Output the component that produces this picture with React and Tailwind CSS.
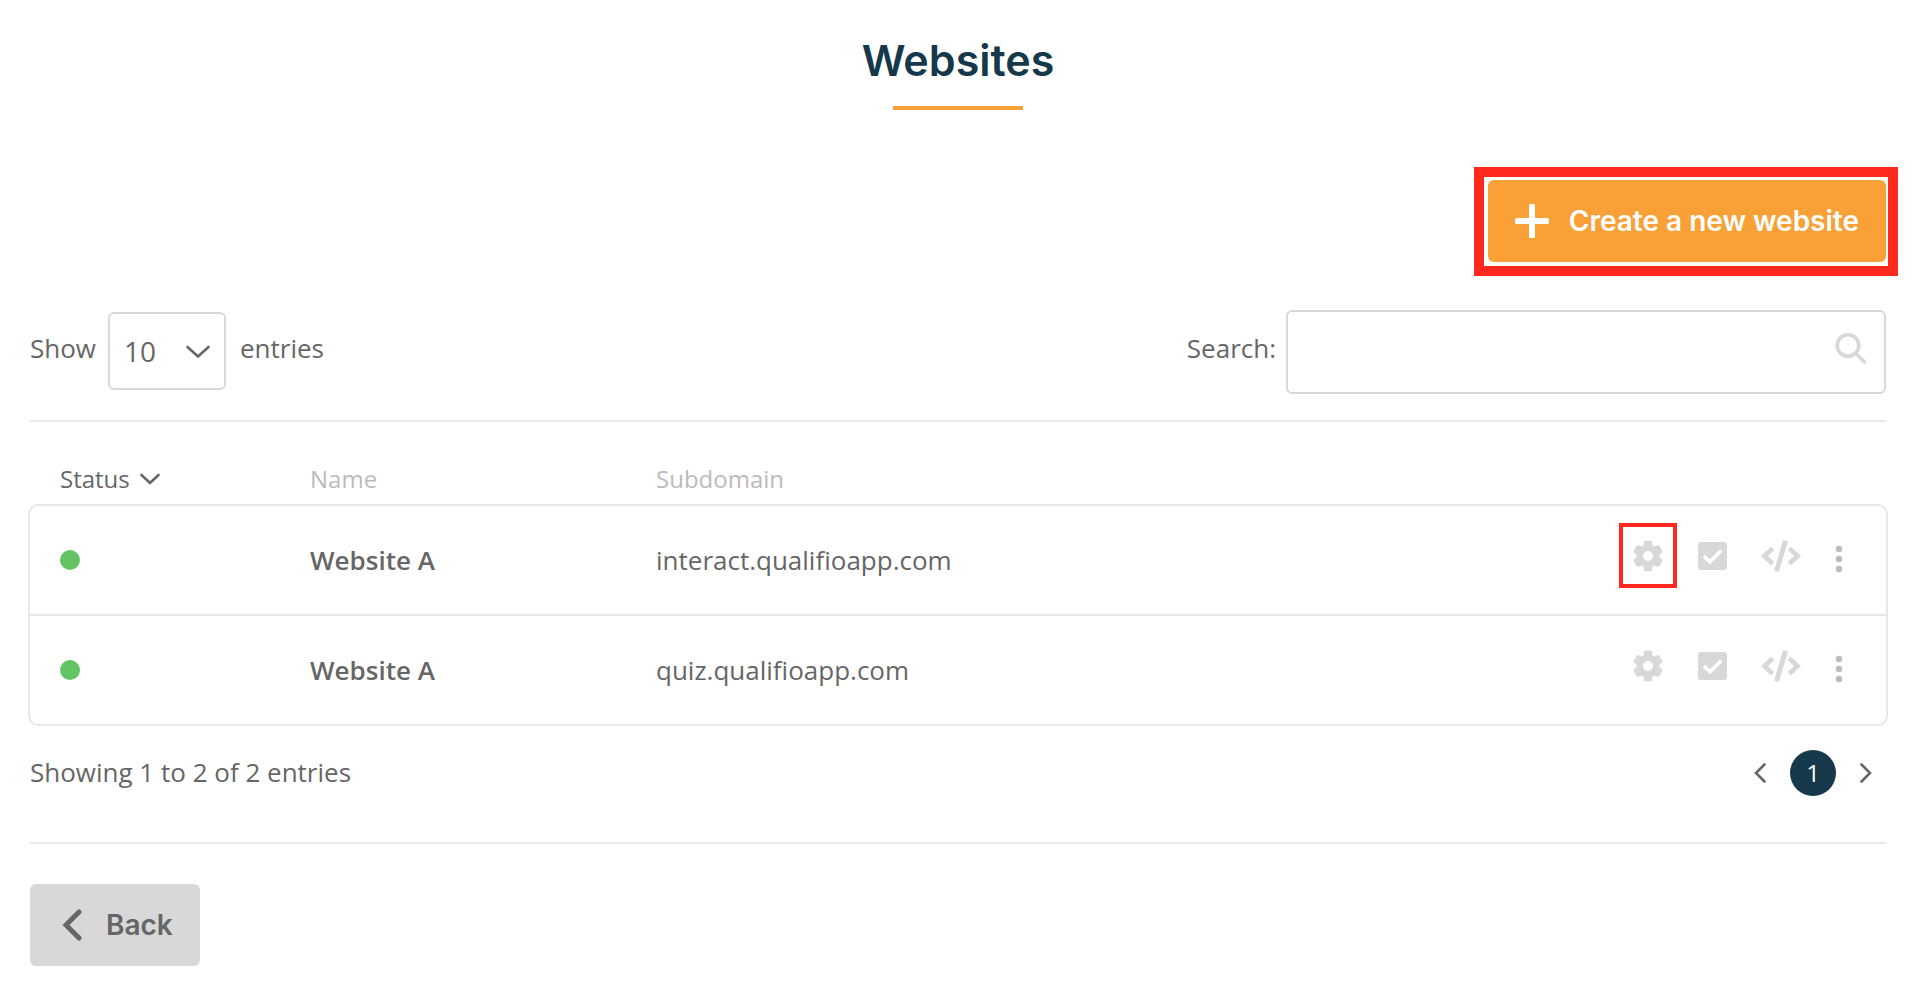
import { useState } from "react";

const websites = [
  { id: 1, name: "Website A", subdomain: "interact.qualifioapp.com", highlighted: true },
  { id: 2, name: "Website A", subdomain: "quiz.qualifioapp.com", highlighted: false },
];

const Chevron = ({ className, points, viewBox, width = 3 }) => (
  <svg
    className={className}
    viewBox={viewBox}
    fill="none"
    stroke="currentColor"
    strokeWidth={width}
    strokeLinecap="round"
    strokeLinejoin="miter"
    aria-hidden="true"
  >
    <polyline points={points} />
  </svg>
);

const GearIcon = () => (
  <svg className="h-8 w-[30px]" viewBox="0 0 30 32" fill="currentColor" aria-hidden="true">
    <path
      fillRule="evenodd"
      d="M11 1.2Q15 0 19 1.2L19.2 5.2L21.6 6.6L25.2 4.8Q28.6 8 29.6 12.2L26.6 14.4V17.6L29.6 19.8Q28.6 24 25.2 27.2L21.6 25.4L19.2 26.8L19 30.8Q15 32 11 30.8L10.8 26.8L8.4 25.4L4.8 27.2Q1.4 24 0.4 19.8L3.4 17.6V14.4L0.4 12.2Q1.4 8 4.8 4.8L8.4 6.6L10.8 5.2ZM15 11a5 5 0 1 0 0 10a5 5 0 1 0 0-10Z"
    />
  </svg>
);

const CheckIcon = () => (
  <svg className="h-7 w-[29px]" viewBox="0 0 29 28" aria-hidden="true">
    <rect width="29" height="28" rx="3" fill="currentColor" />
    <path d="M4.5 15.2L7 12.7L12 17.2L22 7.2L24.5 9.7L12 22.2Z" fill="#fff" />
  </svg>
);

const CodeIcon = () => (
  <svg className="h-8 w-10" viewBox="0 0 40 32" fill="currentColor" aria-hidden="true">
    <path d="M10 6.8L13.4 10L7 16L13.4 22L10 25.4L0 16Z" />
    <path d="M30 6.8L26.6 10L33 16L26.6 22L30 25.4L40 16Z" />
    <path d="M22.2 0L27 1.2L17.8 32L13 30.8Z" />
  </svg>
);

const DotsIcon = () => (
  <svg className="h-[34px] w-2" viewBox="0 0 8 34" fill="currentColor" aria-hidden="true">
    <circle cx="4" cy="10" r="3.2" />
    <circle cx="4" cy="20" r="3.2" />
    <circle cx="4" cy="30" r="3.2" />
  </svg>
);

const RowActions = ({ highlighted }) => (
  <div className="flex items-center justify-end pr-[43px] pb-2 text-[#d8d8d8]">
    <button className="relative mr-[35px]" aria-label="Settings">
      <GearIcon />
      {highlighted && (
        <span className="absolute -inset-x-3.5 -top-[17px] -bottom-4 border-4 border-[#ff2a1d]" />
      )}
    </button>
    <button className="mr-[34px]" aria-label="Activate">
      <CheckIcon />
    </button>
    <button className="mr-[34px]" aria-label="Embed code">
      <CodeIcon />
    </button>
    <button className="text-[#bbb]" aria-label="More actions">
      <DotsIcon />
    </button>
  </div>
);

const App = () => {
  const [pageSize, setPageSize] = useState("10");
  const [query, setQuery] = useState("");

  return (
    <main className="bg-white pt-8 pr-8 pb-[26px] pl-[30px] font-['Open_Sans',sans-serif] text-[26px] leading-9 text-[#666]">
      <header className="flex flex-col items-center">
        <h1 className="font-[Inter,sans-serif] text-[43px] leading-14 font-semibold text-[#15384a]">
          Websites
        </h1>
        <div className="mt-[18px] h-1 w-[130px] bg-[#f9a037]" />
      </header>

      <div className="mt-[70px] flex justify-end">
        <div className="relative">
          <button className="flex h-[82px] items-center gap-5 rounded-md bg-[#f9a037] px-[27px] font-[Inter,sans-serif] text-[28px] font-semibold text-white">
            <svg className="size-[34px]" viewBox="0 0 34 34" fill="currentColor" aria-hidden="true">
              <rect x="14" width="6" height="34" rx="1.5" />
              <rect y="14" width="34" height="6" rx="1.5" />
            </svg>
            Create a new website
          </button>
          <span className="pointer-events-none absolute -top-[13px] -right-3 -bottom-3.5 -left-3.5 border-10 border-[#ff2a1d]" />
        </div>
      </div>

      <div className="mt-12 flex items-center justify-between">
        <div className="flex items-center">
          <label htmlFor="page-size" className="pb-2">
            Show
          </label>
          <div className="relative mr-3.5 ml-3 pb-0.5">
            <select
              id="page-size"
              value={pageSize}
              onChange={(e) => setPageSize(e.target.value)}
              className="block h-[78px] w-[118px] appearance-none rounded-md border-2 border-[#d8d8d8] bg-white pl-3.5 text-[28px]"
            >
              <option>10</option>
              <option>25</option>
              <option>50</option>
            </select>
            <Chevron
              className="pointer-events-none absolute top-[33px] right-4 h-3.5 w-6"
              viewBox="0 0 24 14"
              points="1.5,2 12,11.5 22.5,2"
              width={2.6}
            />
          </div>
          <span className="pb-2">entries</span>
        </div>

        <div className="flex items-center gap-2.5">
          <label htmlFor="search" className="pb-2">
            Search:
          </label>
          <div className="relative">
            <input
              id="search"
              type="text"
              value={query}
              onChange={(e) => setQuery(e.target.value)}
              className="h-[84px] w-[600px] rounded-md border-2 border-[#d8d8d8] bg-white pr-16 pl-4"
            />
            <svg
              className="pointer-events-none absolute top-[22px] right-[19px] size-8 text-[#d8d8d8]"
              viewBox="0 0 32 32"
              fill="none"
              stroke="currentColor"
              strokeWidth="3.6"
              strokeLinecap="round"
              aria-hidden="true"
            >
              <circle cx="13" cy="13.5" r="10.8" />
              <path d="M21 21.5L29.5 30" />
            </svg>
          </div>
        </div>
      </div>

      <hr className="mt-[26px] border-t-2 border-[#e8e8e8]" />

      <div className="-mx-0.5">
        <table className="w-full table-fixed border-separate border-spacing-0 text-left">
          <colgroup>
            <col className="w-[282px]" />
            <col className="w-[346px]" />
            <col />
            <col className="w-[360px]" />
          </colgroup>
          <thead>
            <tr className="h-[82px] align-bottom text-2xl leading-9 text-[#bbb]">
              <th className="pb-[7px] pl-8 font-normal text-[#666]">
                <button className="flex items-center gap-2.5">
                  Status
                  <Chevron
                    className="h-3 w-5"
                    viewBox="0 0 20 12"
                    points="1.5,2 10,10 18.5,2"
                    width={2.6}
                  />
                </button>
              </th>
              <th className="pb-[7px] font-normal">Name</th>
              <th className="pb-[7px] font-normal">Subdomain</th>
              <th aria-label="Actions" />
            </tr>
          </thead>
          <tbody className="[&_td]:h-[110px] [&_td]:border-b-2 [&_td]:border-[#e8e8e8] [&_td:first-child]:border-l-2 [&_td:last-child]:border-r-2 [&_tr:first-child_td]:h-28 [&_tr:first-child_td]:border-t-2 [&_tr:first-child_td:first-child]:rounded-tl-[10px] [&_tr:first-child_td:last-child]:rounded-tr-[10px] [&_tr:last-child_td:first-child]:rounded-bl-[10px] [&_tr:last-child_td:last-child]:rounded-br-[10px]">
            {websites.map((site) => (
              <tr key={site.id}>
                <td className="pl-[30px]">
                  <span
                    className="block size-5 rounded-full bg-[#62c462]"
                    role="img"
                    aria-label="Active"
                  />
                </td>
                <td className="font-semibold">{site.name}</td>
                <td>{site.subdomain}</td>
                <td>
                  <RowActions highlighted={site.highlighted} />
                </td>
              </tr>
            ))}
          </tbody>
        </table>
      </div>

      <div className="mt-6 flex items-center justify-between">
        <p className="pb-0.5">Showing 1 to 2 of 2 entries</p>
        <nav className="mr-3.5 flex items-center gap-6" aria-label="Pagination">
          <button aria-label="Previous page">
            <Chevron
              className="h-5 w-3"
              viewBox="0 0 12 20"
              points="10.5,1.5 2,10 10.5,18.5"
              width={2.6}
            />
          </button>
          <button
            className="size-[46px] rounded-full bg-[#15384a] text-2xl text-white"
            aria-current="page"
          >
            1
          </button>
          <button aria-label="Next page">
            <Chevron
              className="h-5 w-3"
              viewBox="0 0 12 20"
              points="1.5,1.5 10,10 1.5,18.5"
              width={2.6}
            />
          </button>
        </nav>
      </div>

      <hr className="mt-[46px] border-t-2 border-[#e8e8e8]" />

      <button className="mt-10 flex h-[82px] items-center gap-6 rounded-md bg-[#d8d8d8] pr-[27px] pl-8 font-[Inter,sans-serif] text-[28px] font-semibold">
        <Chevron
          className="h-8 w-5"
          viewBox="0 0 20 32"
          points="17,3 4,16 17,29"
          width={5}
        />
        Back
      </button>
    </main>
  );
};

export default App;
